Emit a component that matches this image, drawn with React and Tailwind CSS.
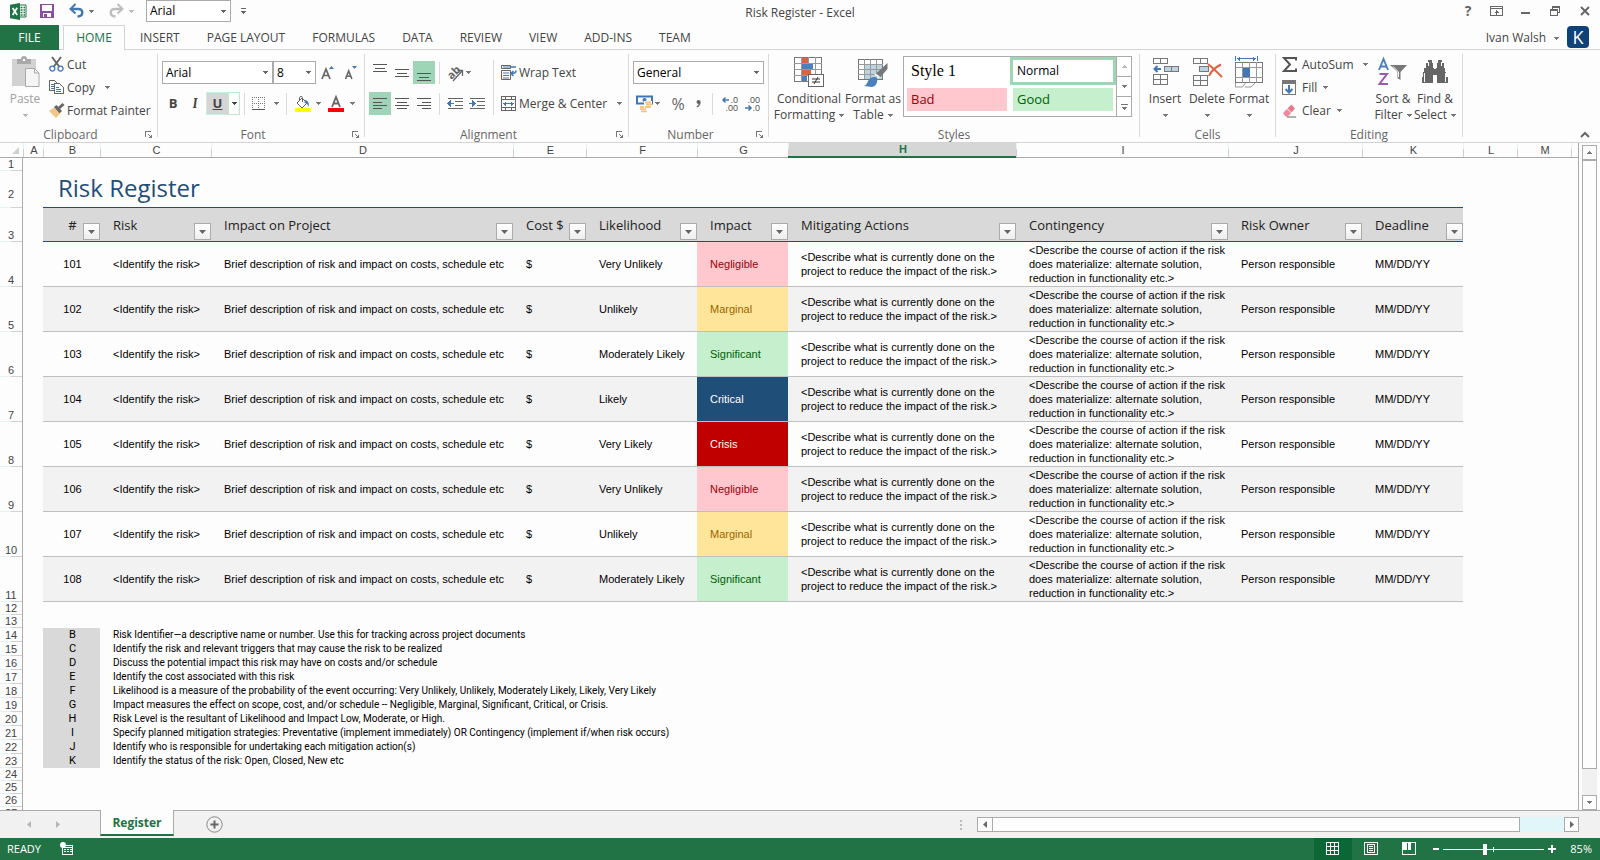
import React, { useState } from 'react';

const columns = [
    { id: 'A', width: 'w-[20px]' },
    { id: 'B', width: 'w-[57px]' },
    { id: 'C', width: 'w-[111px]' },
    { id: 'D', width: 'w-[302px]' },
    { id: 'E', width: 'w-[73px]' },
    { id: 'F', width: 'w-[111px]' },
    { id: 'G', width: 'w-[91px]' },
    { id: 'H', width: 'w-[228px]' },
    { id: 'I', width: 'w-[212px]' },
    { id: 'J', width: 'w-[134px]' },
    { id: 'K', width: 'w-[101px]' },
    { id: 'L', width: 'w-[54px]' },
    { id: 'M', width: 'w-[54px]' },
];

const headings = ['#', 'Risk', 'Impact on Project', 'Cost $', 'Likelihood', 'Impact', 'Mitigating Actions', 'Contingency', 'Risk Owner', 'Deadline'];

const impactStyles = {
    Negligible: 'bg-[#ffc7ce] text-[#9c0006]',
    Marginal: 'bg-[#ffe599] text-[#9c6500]',
    Significant: 'bg-[#c6efce] text-[#006100]',
    Critical: 'bg-[#1f4e78] text-white',
    Crisis: 'bg-[#c00000] text-white',
};

const risks = [
    { id: 101, likelihood: 'Very Unlikely', impact: 'Negligible' },
    { id: 102, likelihood: 'Unlikely', impact: 'Marginal' },
    { id: 103, likelihood: 'Moderately Likely', impact: 'Significant' },
    { id: 104, likelihood: 'Likely', impact: 'Critical' },
    { id: 105, likelihood: 'Very Likely', impact: 'Crisis' },
    { id: 106, likelihood: 'Very Unlikely', impact: 'Negligible' },
    { id: 107, likelihood: 'Unlikely', impact: 'Marginal' },
    { id: 108, likelihood: 'Moderately Likely', impact: 'Significant' },
];

const mitigation = '<Describe what is currently done on the\nproject to reduce the impact of the risk.>';
const contingency = '<Describe the course of action if the risk\ndoes materialize: alternate solution,\nreduction in functionality etc.>';

const legend = [
    ['B', 'Risk Identifier—a descriptive name or number. Use this for tracking across project documents'],
    ['C', 'Identify the risk and relevant triggers that may cause the risk to be realized'],
    ['D', 'Discuss the potential impact this risk may have on costs and/or schedule'],
    ['E', 'Identify the cost associated with this risk'],
    ['F', 'Likelihood is a measure of the probability of the event occurring: Very Unlikely, Unlikely, Moderately Likely, Likely, Very Likely'],
    ['G', 'Impact measures the effect on scope, cost, and/or schedule -- Negligible, Marginal, Significant, Critical, or Crisis.'],
    ['H', 'Risk Level is the resultant of Likelihood and Impact Low, Moderate, or High.'],
    ['I', 'Specify planned mitigation strategies: Preventative (implement immediately) OR Contingency (implement if/when risk occurs)'],
    ['J', 'Identify who is responsible for undertaking each mitigation action(s)'],
    ['K', 'Identify the status of the risk: Open, Closed, New etc'],
];

const Caret = ({ className = 'text-[#777]' }) => (
    <svg width="5" height="3" viewBox="0 0 5 3" className={`shrink-0 ${className}`} fill="currentColor" shapeRendering="crispEdges">
        <path d="M0 0h5v1H0zM1 1h3v1H1zM2 2h1v1H2z" />
    </svg>
);

const Icon = ({ w = 16, h = 16, crisp = true, children }) => (
    <svg width={w} height={h} viewBox={`0 0 ${w} ${h}`} fill="none" className="shrink-0 overflow-visible" shapeRendering={crisp ? 'crispEdges' : 'auto'}>
        {children}
    </svg>
);

/* ---------- Ribbon icons ---------- */

const ExcelLogo = () => (
    <Icon w={17} h={17} crisp={false}>
        <path d="M9 2h7v12H9z" fill="#fff" stroke="#217346" />
        <path d="M10.500 4.500h2M13.500 4.500h1.500M10.500 7h2M13.500 7h1.500M10.500 9.500h2M13.500 9.500h1.500M10.500 12h2M13.500 12h1.500" stroke="#217346" strokeWidth="1.300" />
        <path d="M0 1.800 10 0v17L0 15.200z" fill="#217346" />
        <path d="m2.600 5 4.600 7M7.200 4.800 2.600 12" stroke="#fff" strokeWidth="1.700" />
    </Icon>
);

const SaveIcon = () => (
    <Icon w={14} h={14}>
        <path d="M0 0h14v14H0z" fill="#8c4fa0" />
        <path d="M2 1h10v6H2zM3 9h8v4H3z" fill="#fff" />
        <path d="M4 10h3v3H4z" fill="#8c4fa0" />
    </Icon>
);

const UndoIcon = () => (
    <Icon w={15} h={14} crisp={false}>
        <path d="M2.500 5h6.500c3 0 4.300 1.600 4.300 3.600 0 2.400-2 3.900-4.800 3.900" stroke="#4277b5" strokeWidth="2.400" />
        <path d="M6.500 0 1.500 5l5 4.500" stroke="#4277b5" strokeWidth="2" />
    </Icon>
);

const RedoIcon = () => (
    <Icon w={15} h={14} crisp={false}>
        <path d="M12.500 5H6C3 5 1.700 6.600 1.700 8.600c0 2.400 2 3.900 4.800 3.900" stroke="#bdbdbd" strokeWidth="2.400" />
        <path d="m8.500 0 5 5-5 4.500" stroke="#bdbdbd" strokeWidth="2" />
    </Icon>
);

const PasteIcon = () => (
    <Icon w={30} h={30} crisp={false}>
        <path d="M2 2h24v27H2z" fill="#d2d2d2" />
        <path d="M7 2h4a3 3 0 0 1 6 0h4v5H7z" fill="#a9a9a9" />
        <path d="M13 2h2v2h-2z" fill="#fff" />
        <path d="M15.500 11.500h9l4.500 4.500v13.500H15.500z" fill="#f5f5f5" stroke="#a9a9a9" />
        <path d="M24.500 11.500V16H29" stroke="#a9a9a9" />
    </Icon>
);

const CutIcon = () => (
    <Icon w={15} h={15} crisp={false}>
        <path d="m3 0 7.500 10M12 0 4.500 10" stroke="#666" strokeWidth="2" />
        <circle cx="3.300" cy="11.600" r="2.500" stroke="#4277b5" strokeWidth="1.300" />
        <circle cx="11.500" cy="11.600" r="2.500" stroke="#4277b5" strokeWidth="1.300" />
    </Icon>
);

const CopyIcon = () => (
    <Icon w={15} h={15}>
        <path d="M.5.500h5l3 3v7h-8z" fill="#fff" stroke="#666" />
        <path d="M2 4.500h3M2 6.500h3M2 8.500h3" stroke="#4277b5" />
        <path d="M5.500 3.500h5l4 4v6h-9z" fill="#fff" stroke="#666" />
        <path d="M7 7.500h3M7 9.500h5M7 11.500h5" stroke="#4277b5" />
    </Icon>
);

const PainterIcon = () => (
    <Icon w={16} h={15} crisp={false}>
        <path d="m0 8 5-3.500 6 6.500-4 4z" fill="#f2c583" />
        <path d="m5 4 2.500-2L13 8l-2.500 2.500z" fill="#666" />
        <path d="m10 5 4.500-4" stroke="#666" strokeWidth="3" />
    </Icon>
);

const BordersIcon = () => (
    <Icon w={14} h={14}>
        <path d="M0 .5h14M0 6.500h14M.5 0v13M6.500 0v13M12.500 0v13" stroke="#777" strokeDasharray="1 1" />
        <path d="M0 12.500h13" stroke="#555" />
    </Icon>
);

const BucketIcon = () => (
    <Icon w={17} h={16} crisp={false}>
        <path d="m3 7 5-5 5 5-5 5z" fill="#fff" stroke="#666" />
        <path d="M5.500 5V1.500c0-1.300 3-1.300 3 0V6" stroke="#666" />
        <path d="M11 4c3 .5 4.500 3 3.500 7-1-3-2-4-4-4z" fill="#4277b5" />
        <path d="M1 12h16v4H1z" fill="#ff0" />
    </Icon>
);

const FontColorIcon = () => (
    <Icon w={16} h={16} crisp={false}>
        <path d="m4 11 4-10 4 10M5.500 7.500h5" stroke="#666" strokeWidth="1.800" />
        <path d="M0 12h16v4H0z" fill="#f00" />
    </Icon>
);

const GrowFont = () => (
    <Icon w={14} h={14} crisp={false}>
        <path d="m1 13 4-10 4 10M2.500 9.500h5" stroke="#666" strokeWidth="1.700" />
        <path d="M8 3h5l-2.500-3z" fill="#4277b5" />
    </Icon>
);

const ShrinkFont = () => (
    <Icon w={14} h={14} crisp={false}>
        <path d="m1.500 13 3.200-8 3.200 8M2.700 10.200h4" stroke="#666" strokeWidth="1.600" />
        <path d="M8 0h5l-2.500 3z" fill="#4277b5" />
    </Icon>
);

// d lists the horizontal strokes of an alignment glyph
const Lines = ({ d }) => (
    <Icon w={14} h={18}>
        <path d={d} stroke="#555" />
    </Icon>
);

const OrientationIcon = () => (
    <Icon w={18} h={18} crisp={false}>
        <text x="1" y="13" fontSize="11" fontWeight="700" fill="#666" transform="rotate(-45 7 9)">ab</text>
        <path d="M7 17 16 7M11.500 6.500h5V12" stroke="#666" strokeWidth="1.300" />
    </Icon>
);

const IndentIcon = ({ right }) => (
    <Icon w={16} h={12}>
        <path d="M1 .5h15M8 3.500h8M8 7.500h8M1 10.500h15" stroke="#666" />
        <path d={right ? 'M0 5h4v1H0zM3 2h1v7H3zM4 3h1v5H4zM5 4h1v3H5zM6 5h1v1H6z' : 'M3 5h4v1H3zM3 2h1v7H3zM2 3h1v5H2zM1 4h1v3H1zM0 5h1v1H0z'} fill="#4277b5" />
    </Icon>
);

const WrapIcon = () => (
    <Icon w={16} h={16} crisp={false}>
        <path d="M.5.500h9v3h-9zM.5 5.500h9v9h-9z" fill="#fff" stroke="#666" />
        <path d="M2 2h8M2 8h6M2 10.500h6M2 13h6" stroke="#4277b5" />
        <path d="M10 2h5M15 5.500c0 2-1 3-4 3M12.500 6 10 8.500l2.500 2.500" stroke="#4277b5" strokeWidth="1.500" />
    </Icon>
);

const MergeIcon = () => (
    <Icon w={15} h={15}>
        <path d="M.5.500h14v14H.500zM0 3.500h15M0 11.500h15M4.500 0v4M10.500 0v4M4.500 11v4M10.500 11v4" stroke="#666" />
        <path d="M2 7.500h11M4.500 5.500v4M3.500 6.500v2M10.500 5.500v4M11.500 6.500v2" stroke="#4277b5" />
    </Icon>
);

const CurrencyIcon = () => (
    <Icon w={17} h={17} crisp={false}>
        <path d="M1 1.500h15v7H1z" fill="#fff" stroke="#4277b5" strokeWidth="2" />
        <circle cx="8.500" cy="5" r="2" fill="#4277b5" />
        <rect x="8" y="6" width="8" height="11" fill="#fff" />
        <path d="M9 7.500h6M10 9.700h6M9 12h6M4 12h4M4 14.200h6M5 16.400h6" stroke="#f2c583" strokeWidth="1.800" />
    </Icon>
);

const CommaIcon = () => (
    <Icon w={5} h={8} crisp={false}>
        <circle cx="2.500" cy="2" r="2" fill="#666" />
        <path d="M3.800 1.500c.3 2.500-.8 4.300-3 5.500" stroke="#666" strokeWidth="1.400" />
    </Icon>
);

const DecimalIcon = ({ more }) => (
    <Icon w={17} h={16} crisp={false}>
        <g fontFamily="Liberation Sans, Arial, sans-serif" fontSize="9" fill="#555" textAnchor="end">
            <text x="16" y="7">{more ? '.0' : '.00'}</text>
            <text x="16" y="15">{more ? '.00' : '.0'}</text>
        </g>
        <path d={more ? 'M1 4h6M3.500 1.500 1 4l2.500 2.500' : 'M1 12h6M4.500 9.500 7 12l-2.500 2.500'} stroke="#4277b5" strokeWidth="1.500" />
    </Icon>
);

const ConditionalIcon = () => (
    <Icon w={30} h={30}>
        <path d="M.5.500h27v24H.500z" fill="#fff" stroke="#777" />
        <path d="M0 6.500h28M0 12.500h28M0 18.500h28M7.500 0v25M14.500 0v25M21.500 0v25" stroke="#999" />
        <path d="M8 1h6v5H8zM8 13h9v5H8z" fill="#e0603f" />
        <path d="M8 7h11v5H8zM8 19h5v5H8z" fill="#4a80bd" />
        <path d="M14.500 17.500h15v12h-15z" fill="#fff" stroke="#666" />
        <path d="M18 22h8M18 25h8M24 20l-4 7" stroke="#333" shapeRendering="auto" />
    </Icon>
);

const FormatTableIcon = () => (
    <Icon w={30} h={30}>
        <path d="M.5 2.500h24v20H.500z" fill="#fff" stroke="#777" />
        <path d="M7 8h17v14H7z" fill="#bcd3e2" />
        <path d="M0 7.500h25M0 12.500h25M0 17.500h25M6.500 2v20M12.500 2v20M18.500 2v20" stroke="#999" />
        <g shapeRendering="auto">
            <path d="M29.500 6v6l-7 8-4-4z" fill="#777" />
            <path d="m17 17 4 4" stroke="#fff" strokeWidth="1.500" />
            <path d="M6 29c3-1 3-4 5-6.500 2-2.500 6-3.500 8-1 1 3-1 8-5 8.500z" fill="#4a80bd" />
        </g>
    </Icon>
);

const InsertIcon = () => (
    <Icon w={28} h={30}>
        <path d="M2.500 1.500h14v5h-14zM9.500 1v6M2.500 17.500h14v10h-14zM2 22.500h15M9.500 17v11" stroke="#777" />
        <path d="M13.500 9.500h14v5h-14z" fill="#bcd3e2" stroke="#777" />
        <path d="M20.500 9v6" stroke="#777" />
        <path d="M4 12h6M6.500 9 3.500 12l3 3" stroke="#4277b5" strokeWidth="2" shapeRendering="auto" />
    </Icon>
);

const DeleteIcon = () => (
    <Icon w={30} h={30}>
        <path d="M1.500 1.500h14v5h-14zM8.500 1v6M1.500 18.500h14v10h-14zM1 23.500h15M8.500 18v11" stroke="#777" />
        <path d="M7.500 9.500h9v5h-9z" fill="#bcd3e2" stroke="#777" />
        <path d="M16 7c4 3 9 8 14 13M29 7.500C24 10 19 14 17 19" stroke="#e0603f" strokeWidth="2" shapeRendering="auto" />
    </Icon>
);

const FormatIcon = () => (
    <Icon w={30} h={32}>
        <path d="M1.500 0v5M23.500 0v5M3 2.500h19M5.500.500v4M4.500 1.500v2M19.500.500v4M20.500 1.500v2" stroke="#4277b5" />
        <path d="M1.500 6.500h27v20h-27z" fill="#fff" stroke="#777" />
        <path d="M1 11.500h28M1 21.500h28M8.500 6v21M15.500 6v21M22.500 6v21" stroke="#999" />
        <path d="M9 12h7v9H9z" fill="#4277b5" />
        <path d="M1.500 27v4h7l3-4M11 31h6l4-4" stroke="#999" shapeRendering="auto" />
    </Icon>
);

const SigmaIcon = () => (
    <Icon w={15} h={15} crisp={false}>
        <path d="M14 3.500V1H2l6 6.500L2 14h12v-2.500" stroke="#555" strokeWidth="2" />
    </Icon>
);

const FillIcon = () => (
    <Icon w={15} h={16}>
        <path d="M.5.500h13v14H.500z" fill="#fff" stroke="#777" />
        <path d="M0 0h14v4H0z" fill="#777" />
        <path d="M7 5v8M3.500 9 7 12.500 10.500 9" stroke="#4277b5" strokeWidth="2" shapeRendering="auto" />
    </Icon>
);

const EraserIcon = () => (
    <Icon w={15} h={14} crisp={false}>
        <path d="m1 9 4-4 4 4-3 3.500H3.500z" fill="#ee8a9b" />
        <path d="m5.500 4.500 4-4 3.500 4-3.500 4z" fill="#e8788c" />
        <path d="M5 13h9" stroke="#666" />
    </Icon>
);

const SortIcon = () => (
    <Icon w={30} h={30} crisp={false}>
        <path d="M1 13 5.500 2 10 13M2.500 9.500h6" stroke="#4a80bd" strokeWidth="1.900" />
        <path d="M1.500 17h7.500L1.500 27h8.500" stroke="#9b5bb0" strokeWidth="2" />
        <path d="M12 8h17l-6.500 7v8l-3-2v-6z" fill="#777" />
        <path d="M15 9.500 20.500 15v5" stroke="#fff" />
    </Icon>
);

const BinocularsIcon = () => (
    <Icon w={28} h={26}>
        <path d="M7 1h4v3h1v5h4V4h1V1h4v3h2v5h1v4h1v5h2v6H16v-8h-4v8H1v-6h1v-5h1V9h2V4h2z" fill="#666" />
        <path d="M12 11h4v4h-4z" fill="#666" />
        <path d="M3.500 14v9M24.500 14v9M13 9.500h2M7.500 3v4M20.500 3v4" stroke="#fff" />
    </Icon>
);

/* ---------- Ribbon building blocks ---------- */

const Group = ({ label, width, launcher, children }) => (
    <section className={`flex h-[88px] shrink-0 flex-col ${width}`} aria-label={label}>
        <div className="flex h-[72px]">{children}</div>
        <div className="flex h-4 items-center pt-0.5">
            <span className="flex-1 text-center leading-4 text-[#666]">{label}</span>
            {launcher && (
                <button className="flex h-4 w-4 items-center justify-center" aria-label={`${label} settings`}>
                    <Icon w={8} h={8}>
                        <path d="M.5 6V.500H6M3 3l4 4" stroke="#777" />
                        <path d="M7 3v4H3z" fill="#777" />
                    </Icon>
                </button>
            )}
        </div>
    </section>
);

const Rule = ({ className = 'h-[83px]' }) => <div className={`w-px shrink-0 bg-[#d9d9d9] ${className}`} />;

const Tool = ({ label, className = 'w-[22px]', children }) => (
    <button aria-label={label} className={`flex h-[23px] shrink-0 items-center justify-center ${className}`}>
        {children}
    </button>
);

const BigTool = ({ icon, lines, className = 'w-[42px]', muted }) => (
    <button className={`flex shrink-0 flex-col items-center pt-0.5 leading-4 ${className} ${muted ? 'text-[#a0a0a0]' : ''}`}>
        <span className="mb-[3px] flex h-8 items-center justify-center">{icon}</span>
        <span className="whitespace-nowrap">{lines[0]}</span>
        <span className="flex h-4 items-center gap-1 whitespace-nowrap">
            {lines[1]}
            <Caret className={muted ? 'text-[#b5b5b5]' : 'text-[#777]'} />
        </span>
    </button>
);

const SmallTool = ({ icon, text, className = 'gap-0.5', caret }) => (
    <button className={`flex h-[23px] items-center whitespace-nowrap ${className}`}>
        <span className="flex w-4 shrink-0 items-center">{icon}</span>
        {text}
        {caret && <span className="ml-0.5"><Caret /></span>}
    </button>
);

const Combo = ({ label, value, className }) => (
    <div className={`relative shrink-0 ${className}`}>
        <select aria-label={label} defaultValue={value} className="h-full w-full appearance-none border border-[#ababab] bg-white pl-[3px] text-black outline-none">
            <option>{value}</option>
        </select>
        <span className="pointer-events-none absolute inset-y-0 right-[5px] flex items-center">
            <Caret className="text-[#666]" />
        </span>
    </div>
);

const TitleBar = () => (
    <header className="flex h-[25px] shrink-0 items-start justify-between">
        <div className="flex h-[22px] flex-1 items-center pl-2.5">
            <ExcelLogo />
            <button aria-label="Save" className="ml-[13px]"><SaveIcon /></button>
            <button aria-label="Undo" className="ml-[15px]"><UndoIcon /></button>
            <button aria-label="Undo history" className="ml-[5px]"><Caret /></button>
            <button aria-label="Redo" className="ml-[15px]"><RedoIcon /></button>
            <button aria-label="Redo history" className="ml-[5px]"><Caret className="text-[#bbb]" /></button>
            <Combo label="Quick font" value="Arial" className="ml-3 h-[22px] w-[85px]" />
            <button aria-label="Customize toolbar" className="ml-2.5 flex flex-col items-center gap-0.5">
                <span className="h-px w-[5px] bg-[#666]" />
                <Caret className="text-[#666]" />
            </button>
        </div>
        <h1 className="leading-[25px]">Risk Register - Excel</h1>
        <div className="flex h-[22px] flex-1 items-center justify-end pr-2.5 text-[#666]">
            <button aria-label="Help" className="w-[10px] text-sm font-bold">?</button>
            <button aria-label="Ribbon display options" className="ml-[17px]">
                <Icon w={14} h={11}>
                    <path d="M.5.500h12v9H.500zM0 2.500h13M6.500 4v5M5.500 5.500h2M4.500 6.500h4" stroke="#666" />
                </Icon>
            </button>
            <button aria-label="Minimize" className="ml-[17px] flex h-[11px] items-center pt-1">
                <span className="h-0.5 w-[9px] bg-[#666]" />
            </button>
            <button aria-label="Restore" className="ml-5">
                <Icon w={11} h={10}>
                    <path d="M.5 3.500h7v6h-7zM0 4.500h8M2.500 3V.500h7v6H8M2 1.500h8" stroke="#666" />
                </Icon>
            </button>
            <button aria-label="Close" className="ml-[19px]">
                <Icon w={10} h={10} crisp={false}>
                    <path d="m1 1 8 8M9 1 1 9" stroke="#666" strokeWidth="2" />
                </Icon>
            </button>
        </div>
    </header>
);

const tabs = ['INSERT', 'PAGE LAYOUT', 'FORMULAS', 'DATA', 'REVIEW', 'VIEW', 'ADD-INS', 'TEAM'];

const RibbonTabs = () => (
    <nav className="flex h-[25px] shrink-0 items-stretch border-b border-[#d4d4d4] whitespace-nowrap">
        <button className="mr-1 -mb-px w-[59px] bg-[#217346] text-white">FILE</button>
        <button className="mr-0.5 -mb-px w-[62px] border border-b-0 border-[#d4d4d4] bg-[#fdfdfd] text-[#217346]">HOME</button>
        <div className="flex gap-px">
            {tabs.map((tab) => (
                <button key={tab} className="px-[13px] pt-0.5">{tab}</button>
            ))}
        </div>
        <div className="ml-auto flex items-center pr-[11px]">
            <button className="flex items-center gap-2 pt-0.5">Ivan Walsh <Caret /></button>
            <span className="ml-2 flex h-[22px] w-[22px] items-center justify-center rounded-sm bg-[#0f4377] text-lg leading-none text-white">K</span>
        </div>
    </nav>
);

const Ribbon = () => (
    <div className="flex h-[93px] shrink-0 border-b border-[#d4d4d4] pt-1">
        <Group label="Clipboard" width="w-[157px]" launcher>
            <BigTool icon={<PasteIcon />} lines={['Paste', '']} className="ml-1 w-[42px]" muted />
            <div className="ml-[3px] flex flex-col">
                <SmallTool icon={<CutIcon />} text="Cut" className="gap-0.5 pb-0.5" />
                <SmallTool icon={<CopyIcon />} text={<span className="mr-1.5">Copy</span>} className="gap-0.5 pb-0.5" caret />
                <SmallTool icon={<PainterIcon />} text="Format Painter" className="gap-0.5 pb-0.5" />
            </div>
        </Group>
        <Rule />
        <Group label="Font" width="w-[206px]" launcher>
            <div className="flex flex-col gap-2 pt-[7px] pl-1">
                <div className="flex h-[23px]">
                    <Combo label="Font" value="Arial" className="h-[23px] w-[111px]" />
                    <Combo label="Font size" value="8" className="h-[23px] w-[43px]" />
                    <Tool label="Increase font size" className="w-[23px]"><GrowFont /></Tool>
                    <Tool label="Decrease font size" className="w-[23px]"><ShrinkFont /></Tool>
                </div>
                <div className="flex h-[23px] items-center text-[13px]">
                    <Tool label="Bold"><b>B</b></Tool>
                    <Tool label="Italic"><b className="font-serif italic">I</b></Tool>
                    <Tool label="Underline" className="w-[22px] border border-r-0 border-[#c8efe0] bg-[#d5d5d5]"><b className="underline">U</b></Tool>
                    <Tool label="Underline style" className="w-3 border border-[#bfe8c9]"><Caret className="text-[#444]" /></Tool>
                    <Rule className="ml-1 h-[22px]" />
                    <Tool label="Borders" className="w-7"><BordersIcon /></Tool>
                    <Tool label="Border style" className="w-1.5"><Caret /></Tool>
                    <Rule className="mx-[7px] h-[22px]" />
                    <Tool label="Fill color" className="w-[17px]"><BucketIcon /></Tool>
                    <Tool label="Fill color list" className="w-3.5"><Caret /></Tool>
                    <Tool label="Font color" className="ml-0.5 w-[18px]"><FontColorIcon /></Tool>
                    <Tool label="Font color list" className="w-3.5"><Caret /></Tool>
                </div>
            </div>
        </Group>
        <Rule />
        <Group label="Alignment" width="w-[263px]" launcher>
            <div className="flex flex-col gap-2 pt-[7px] pl-1">
                <div className="flex h-[23px] items-center">
                    <Tool label="Top align"><Lines d="M0 .500h14M2 4.500h10M0 7.500h14" /></Tool>
                    <Tool label="Middle align"><Lines d="M0 5.500h14M2 9.500h10M0 12.500h14" /></Tool>
                    <Tool label="Bottom align" className="w-[22px] bg-[#9fd5b7]"><Lines d="M0 9.500h14M2 13.500h10M0 16.500h14" /></Tool>
                    <Rule className="mx-1 h-[22px]" />
                    <Tool label="Orientation"><OrientationIcon /></Tool>
                    <Caret />
                </div>
                <div className="flex h-[23px] items-center">
                    <Tool label="Align left" className="w-[22px] bg-[#9fd5b7]"><Lines d="M0 3.500h14M0 7.500h9M0 10.500h14M0 13.500h9" /></Tool>
                    <Tool label="Center"><Lines d="M0 3.500h14M2 7.500h10M0 10.500h14M2 13.500h10" /></Tool>
                    <Tool label="Align right"><Lines d="M0 3.500h14M5 7.500h9M0 10.500h14M5 13.500h9" /></Tool>
                    <Rule className="mx-1 h-[22px]" />
                    <Tool label="Decrease indent"><IndentIcon /></Tool>
                    <Tool label="Increase indent"><IndentIcon right /></Tool>
                </div>
            </div>
            <Rule className="mt-1.5 ml-[5px] h-[55px]" />
            <div className="flex flex-col gap-2 pt-[7px] pl-[7px]">
                <SmallTool icon={<WrapIcon />} text="Wrap Text" />
                <SmallTool icon={<MergeIcon />} text={<span className="mr-1.5">Merge &amp; Center</span>} caret />
            </div>
        </Group>
        <Rule />
        <Group label="Number" width="w-[139px]" launcher>
            <div className="flex flex-col gap-2 pt-[7px] pl-1">
                <Combo label="Number format" value="General" className="h-[23px] w-[131px]" />
                <div className="flex h-[23px] items-center">
                    <Tool label="Accounting format"><CurrencyIcon /></Tool>
                    <Caret />
                    <Tool label="Percent style" className="ml-1.5 w-[24px] text-base text-[#666]">%</Tool>
                    <Tool label="Comma style" className="mr-0.5 w-4"><CommaIcon /></Tool>
                    <Rule className="mr-1.5 ml-1 h-[22px]" />
                    <Tool label="Increase decimal"><DecimalIcon more /></Tool>
                    <Tool label="Decrease decimal"><DecimalIcon /></Tool>
                </div>
            </div>
        </Group>
        <Rule />
        <Group label="Styles" width="w-[370px]">
            <BigTool icon={<ConditionalIcon />} lines={['Conditional', 'Formatting']} className="ml-1.5 w-[68px]" />
            <BigTool icon={<FormatTableIcon />} lines={['Format as', 'Table']} className="w-[60px]" />
            <div className="mt-0.5 flex h-[61px] w-[229px] border border-[#ababab] bg-white">
                <div className="grid flex-1 grid-cols-2 pb-0.5 text-[13px] text-black">
                    <button className="m-[3px] pl-1 text-left font-['Liberation_Serif',serif] text-base leading-none">Style 1</button>
                    <button className="border-[3px] border-[#9fd5b7] pl-1 text-left text-xs">Normal</button>
                    <button className="m-[3px] bg-[#ffc7ce] pl-1 text-left text-[#9c0006]">Bad</button>
                    <button className="m-[3px] bg-[#c6efce] pl-1 text-left text-[#006100]">Good</button>
                </div>
                <div className="flex w-[15px] flex-col divide-y divide-[#ababab] border-l border-[#ababab]">
                    <button aria-label="Previous styles" className="flex flex-1 items-center justify-center">
                        <span className="rotate-180"><Caret className="text-[#bbb]" /></span>
                    </button>
                    <button aria-label="Next styles" className="flex flex-1 items-center justify-center"><Caret /></button>
                    <button aria-label="More styles" className="flex flex-1 flex-col items-center justify-center gap-0.5">
                        <span className="h-px w-[7px] bg-[#777]" />
                        <Caret />
                    </button>
                </div>
            </div>
        </Group>
        <Rule />
        <Group label="Cells" width="w-[135px]">
            <BigTool icon={<InsertIcon />} lines={['Insert', '']} className="ml-1 w-[42px]" />
            <BigTool icon={<DeleteIcon />} lines={['Delete', '']} />
            <BigTool icon={<FormatIcon />} lines={['Format', '']} />
        </Group>
        <Rule />
        <Group label="Editing" width="w-[186px]">
            <div className="ml-1.5 flex w-[86px] flex-col">
                <SmallTool icon={<SigmaIcon />} text={<span className="flex-1 text-left">AutoSum</span>} className="gap-1 pb-0.5" caret />
                <SmallTool icon={<FillIcon />} text="Fill" className="gap-1 pb-0.5" caret />
                <SmallTool icon={<EraserIcon />} text="Clear" className="gap-1 pb-0.5" caret />
            </div>
            <BigTool icon={<SortIcon />} lines={['Sort &', 'Filter']} className="ml-1 w-[42px]" />
            <BigTool icon={<BinocularsIcon />} lines={['Find &', 'Select']} />
        </Group>
        <Rule />
        <button aria-label="Collapse ribbon" className="mr-2.5 mb-1 ml-auto self-end">
            <Icon w={10} h={7} crisp={false}>
                <path d="m1 6 4-4 4 4" stroke="#666" strokeWidth="2" />
            </Icon>
        </button>
    </div>
);

/* ---------- Worksheet ---------- */

const RowNumber = ({ children, pad = 'pb-px' }) => (
    <th
        scope="row"
        className={`border-r border-[#ababab] bg-[linear-gradient(to_right,#dff5f5_50%,#d0d0d0_50%)] bg-[length:100%_1px] bg-bottom bg-no-repeat p-0 ${pad} text-center align-bottom text-[11px] leading-3 font-normal text-[#444]`}
    >
        {children}
    </th>
);

const FilterButton = ({ name }) => (
    <button
        aria-label={`Filter ${name}`}
        className="absolute right-0 bottom-px flex h-[17px] w-[17px] items-center justify-center border border-[#ababab] bg-linear-to-b from-white to-[#eee]"
    >
        <svg width="7" height="4" viewBox="0 0 7 4"><path d="M0 0h7L3.500 4z" fill="#666" /></svg>
    </button>
);

const Sheet = () => (
    <table className="w-full table-fixed border-separate border-spacing-0 font-['Liberation_Sans',Arial,sans-serif] text-[11px] text-black">
        <colgroup>
            <col className="w-[23px]" />
            {columns.map((col) => <col key={col.id} className={col.width} />)}
            <col />
        </colgroup>
        <thead>
            <tr className="h-[15px] text-[#444]">
                <td className="border-b border-[#ababab] p-0">
                    <svg width="7" height="7" viewBox="0 0 7 7" className="ml-3"><path d="M7 0v7H0z" fill="#d0d0d0" /></svg>
                </td>
                {columns.map((col) => (
                    <th
                        key={col.id}
                        scope="col"
                        className={`bg-[linear-gradient(to_bottom,#dff5f5_45%,#d0d0d0_45%)] bg-[length:1px_100%] bg-no-repeat p-0 pl-0.5 text-[11px] leading-[13px] ${col.id === 'H' ? 'border-b-2 border-[#217346] bg-[#d6d6d6] font-bold text-[#217346]' : 'border-b border-[#ababab] font-normal'}`}
                    >
                        {col.id}
                    </th>
                ))}
                <td className="border-b border-[#ababab] bg-[linear-gradient(to_bottom,#dff5f5_45%,#d0d0d0_45%)] bg-[length:1px_100%] bg-no-repeat p-0" />
            </tr>
        </thead>
        <tbody>
            <tr className="h-[13px]"><RowNumber>1</RowNumber></tr>
            <tr className="h-[37px]">
                <RowNumber pad="pb-2">2</RowNumber>
                <td />
                <td colSpan={10} className="border-b border-[#1f4e78] p-0 pb-0.5 pl-[15px]">
                    <h2 className="font-['Open_Sans','Noto_Sans',sans-serif] text-2xl leading-8 text-[#1f4e78]">Risk Register</h2>
                </td>
            </tr>
            <tr className="h-[34px]">
                <RowNumber>3</RowNumber>
                <td />
                {headings.map((name, i) => (
                    <th
                        key={name}
                        scope="col"
                        className={`relative border-b border-[#1f4e78] bg-[#d9d9d9] p-0 font-['Open_Sans','Noto_Sans',sans-serif] text-[13px] leading-5 font-normal whitespace-nowrap text-[#222] ${i === 0 ? 'pl-0.5 text-center' : 'pl-[13px] text-left'}`}
                    >
                        {name}
                        <FilterButton name={name} />
                    </th>
                ))}
            </tr>
            {risks.map((risk, i) => {
                const cell = `border-b border-[#bfbfbf] p-0 pl-[13px] leading-[14px] whitespace-pre ${i % 2 ? 'bg-[#f2f2f2]' : ''}`;
                return (
                    <tr key={risk.id} className="h-[45px]">
                        <RowNumber>{i + 4}</RowNumber>
                        <td />
                        <td className={`border-b border-[#bfbfbf] p-0 pl-0.5 text-center ${i % 2 ? 'bg-[#f2f2f2]' : ''}`}>{risk.id}</td>
                        <td className={cell}>{'<Identify the risk>'}</td>
                        <td className={cell}>Brief description of risk and impact on costs, schedule etc</td>
                        <td className={cell}>$</td>
                        <td className={cell}>{risk.likelihood}</td>
                        <td className={`border-b border-[#bfbfbf] p-0 pl-[13px] ${impactStyles[risk.impact]}`}>{risk.impact}</td>
                        <td className={cell}>{mitigation}</td>
                        <td className={cell}>{contingency}</td>
                        <td className={cell}>Person responsible</td>
                        <td className={cell}>MM/DD/YY</td>
                    </tr>
                );
            })}
            <tr className="h-[13px]"><RowNumber>12</RowNumber></tr>
            <tr className="h-[13px]"><RowNumber>13</RowNumber></tr>
            {legend.map(([letter, text], i) => (
                <tr key={letter} className="h-[14px]">
                    <RowNumber>{i + 14}</RowNumber>
                    <td className="p-0" />
                    <td className="bg-[#d9d9d9] p-0 pl-0.5 text-center font-['Roboto',sans-serif] leading-[14px]">{letter}</td>
                    <td colSpan={8} className="p-0 pl-[13px] font-['Roboto',sans-serif] text-[10px] leading-[14px] whitespace-nowrap">{text}</td>
                </tr>
            ))}
            {[24, 25, 26, 27].map((n) => (
                <tr key={n} className="h-[13px]"><RowNumber>{n}</RowNumber></tr>
            ))}
        </tbody>
    </table>
);

const VerticalScroll = () => (
    <div className="flex w-[21px] shrink-0 flex-col px-[3px] pt-0.5">
        <button aria-label="Scroll up" className="flex h-[15px] shrink-0 items-center justify-center border border-[#ababab]">
            <span className="rotate-180"><Caret /></span>
        </button>
        <div className="flex flex-1 flex-col bg-[#f1f1f1]">
            <div className="mb-[26px] flex-1 border border-[#ababab] bg-[#fdfdfd]" />
        </div>
        <button aria-label="Scroll down" className="flex h-[15px] shrink-0 items-center justify-center border border-[#ababab]">
            <Caret />
        </button>
    </div>
);

const SheetTabs = () => (
    <div className="flex h-7 shrink-0 items-stretch border-t border-[#ababab] bg-[#f1f1f1]">
        <button aria-label="Previous sheet" className="ml-[27px] flex w-[5px] items-center">
            <svg width="4" height="7" viewBox="0 0 4 7"><path d="M4 0v7L0 3.500z" fill="#b5b5b5" /></svg>
        </button>
        <button aria-label="Next sheet" className="ml-6 flex w-[5px] items-center">
            <svg width="4" height="7" viewBox="0 0 4 7"><path d="M0 0v7l4-3.500z" fill="#b5b5b5" /></svg>
        </button>
        <button className="-mt-px mb-0.5 ml-[39px] w-[74px] border-x border-b-2 border-x-[#ababab] border-b-[#217346] bg-[#fdfdfd] pt-0.5 text-xs font-bold text-[#217346]">Register</button>
        <button aria-label="New sheet" className="ml-8">
            <Icon w={17} h={17} crisp={false}>
                <circle cx="8.500" cy="8.500" r="7.700" stroke="#888" />
                <path d="M8.500 4.500v8M4.500 8.500h8" stroke="#666" strokeWidth="2" />
            </Icon>
        </button>
        <div className="ml-auto flex w-[640px] items-center">
            <div className="flex w-[17px] flex-col gap-0.5">
                <span className="h-0.5 w-0.5 bg-[#bbb]" />
                <span className="h-0.5 w-0.5 bg-[#bbb]" />
                <span className="h-0.5 w-0.5 bg-[#bbb]" />
            </div>
            <button aria-label="Scroll left" className="flex h-[15px] w-[15px] items-center justify-center border border-r-0 border-[#ababab] bg-[#fdfdfd]">
                <svg width="4" height="7" viewBox="0 0 4 7"><path d="M4 0v7L0 3.500z" fill="#666" /></svg>
            </button>
            <div className="flex h-[15px] flex-1 bg-[#e0f6f8]">
                <div className="mr-11 flex-1 border border-[#ababab] bg-[#fdfdfd]" />
            </div>
            <button aria-label="Scroll right" className="mr-[21px] flex h-[15px] w-[15px] items-center justify-center border border-[#ababab] bg-[#fdfdfd]">
                <svg width="4" height="7" viewBox="0 0 4 7"><path d="M0 0v7l4-3.500z" fill="#666" /></svg>
            </button>
        </div>
    </div>
);

const StatusBar = () => {
    const [zoom, setZoom] = useState(85);

    return (
        <footer className="flex h-[22px] shrink-0 items-center bg-[#217346] pr-2 pl-[7px] text-[11px] text-white">
            <span>READY</span>
            <button aria-label="Macro recording" className="ml-[19px]">
                <Icon w={14} h={14}>
                    <path d="M2.500 3.500h10v9h-10zM2 5.500h11" stroke="#fff" />
                    <path d="M4 7h2v1H4zM7 7h2v1H7zM10 7h2v1h-2zM4 9h2v1H4zM7 9h2v1H7zM10 9h2v1h-2z" fill="#fff" />
                    <circle cx="3" cy="3" r="3" fill="#fff" shapeRendering="auto" />
                </Icon>
            </button>
            <button aria-label="Normal view" className="ml-auto flex h-full w-[38px] items-center justify-center bg-[#0c6636]">
                <Icon w={14} h={14}><path d="M.5.500h12v12H.500zM4.500 0v13M8.500 0v13M0 4.500h13M0 8.500h13" stroke="#fff" /></Icon>
            </button>
            <button aria-label="Page layout view" className="flex w-[38px] justify-center">
                <Icon w={14} h={14}><path d="M.5.500h13v12H.500zM3.500 2.500h7v8h-7zM5 4.500h4M5 6.500h4M5 8.500h4" stroke="#fff" /></Icon>
            </button>
            <button aria-label="Page break view" className="flex w-[38px] justify-center">
                <Icon w={14} h={14}>
                    <path d="M.5.500h13v12H.500z" stroke="#fff" />
                    <path d="M1 1h4v7H1zM6 1h3v7H6z" fill="#fff" />
                </Icon>
            </button>
            <button aria-label="Zoom out" className="ml-[5px] w-[7px]"><span className="block h-0.5 w-1.5 bg-white" /></button>
            <input
                type="range"
                aria-label="Zoom"
                min="10"
                max="190"
                value={zoom}
                onChange={(e) => setZoom(Number(e.target.value))}
                className="mx-[3px] h-3 w-[101px] appearance-none bg-[linear-gradient(#fff,#fff),linear-gradient(#fff,#fff)] bg-[length:100%_1px,1px_5px] bg-[position:center,center] bg-no-repeat [&::-webkit-slider-thumb]:h-[11px] [&::-webkit-slider-thumb]:w-1 [&::-webkit-slider-thumb]:appearance-none [&::-webkit-slider-thumb]:bg-white"
            />
            <button aria-label="Zoom in" className="ml-px">
                <Icon w={8} h={8}><path d="M3 0h2v8H3zM0 3h8v2H0z" fill="#fff" /></Icon>
            </button>
            <span className="w-9 flex-none text-right">{zoom}%</span>
        </footer>
    );
};

const App = () => (
    <div className="flex h-screen flex-col overflow-hidden bg-[#fdfdfd] font-['Open_Sans','Noto_Sans',sans-serif] text-xs text-[#444]">
        <TitleBar />
        <RibbonTabs />
        <Ribbon />
        <main className="flex min-h-0 flex-1">
            <div className="min-w-0 flex-1 overflow-hidden border-r border-[#ababab]">
                <Sheet />
            </div>
            <VerticalScroll />
        </main>
        <SheetTabs />
        <StatusBar />
    </div>
);

export default App;
